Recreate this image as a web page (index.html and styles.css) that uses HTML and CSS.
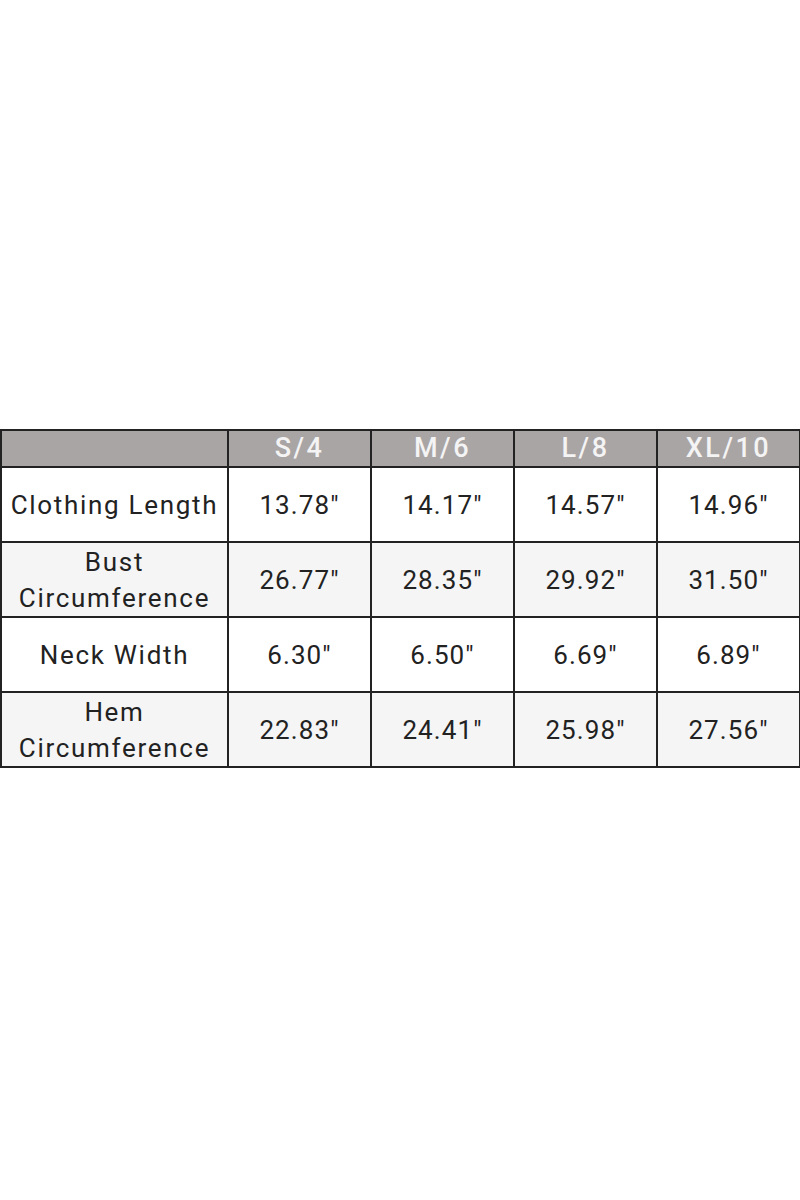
FILE: index.html
```html
<!DOCTYPE html>
<html>
<head>
<meta charset="utf-8">
<link rel="stylesheet" href="styles.css">
</head>
<body>
<div class="page">
  <table class="size">
    <colgroup>
      <col class="c-label"><col class="c-val"><col class="c-val"><col class="c-val"><col class="c-val">
    </colgroup>
    <thead>
      <tr><th></th><th>S/4</th><th>M/6</th><th>L/8</th><th>XL/10</th></tr>
    </thead>
    <tbody>
      <tr><td class="lbl">Clothing Length</td><td>13.78"</td><td>14.17"</td><td>14.57"</td><td>14.96"</td></tr>
      <tr class="alt"><td class="lbl">Bust<br>Circumference</td><td>26.77"</td><td>28.35"</td><td>29.92"</td><td>31.50"</td></tr>
      <tr><td class="lbl">Neck Width</td><td>6.30"</td><td>6.50"</td><td>6.69"</td><td>6.89"</td></tr>
      <tr class="alt"><td class="lbl">Hem<br>Circumference</td><td>22.83"</td><td>24.41"</td><td>25.98"</td><td>27.56"</td></tr>
    </tbody>
  </table>
</div>
</body>
</html>
```
FILE: styles.css
```css
html, body {
  margin: 0;
  padding: 0;
  background: #ffffff;
}
.page {
  width: 800px;
  height: 1200px;
  display: flex;
  align-items: flex-start;
  padding-top: 429px;
  box-sizing: border-box;
}
.size {
  width: 800px;
  border-collapse: collapse;
  table-layout: fixed;
  font-family: "Roboto", "Liberation Sans", sans-serif;
  color: #222222;
}
.c-label { width: 227px; }
.c-val { width: 143px; }
.size th, .size td {
  border: 2px solid #222222;
  text-align: center;
  vertical-align: middle;
  padding: 0;
}
.size th {
  background: #aaa5a5;
  color: #f4f4f4;
  font-weight: 500;
  font-size: 27px;
  letter-spacing: 2.5px;
  height: 35px;
  line-height: 35px;
}
.size td {
  height: 73px;
  font-size: 26px;
  letter-spacing: 1.1px;
  line-height: 36px;
  font-weight: 400;
}
.size td.lbl {
  letter-spacing: 1.7px;
}
.size tr.alt td {
  background: #f5f5f5;
}
```
